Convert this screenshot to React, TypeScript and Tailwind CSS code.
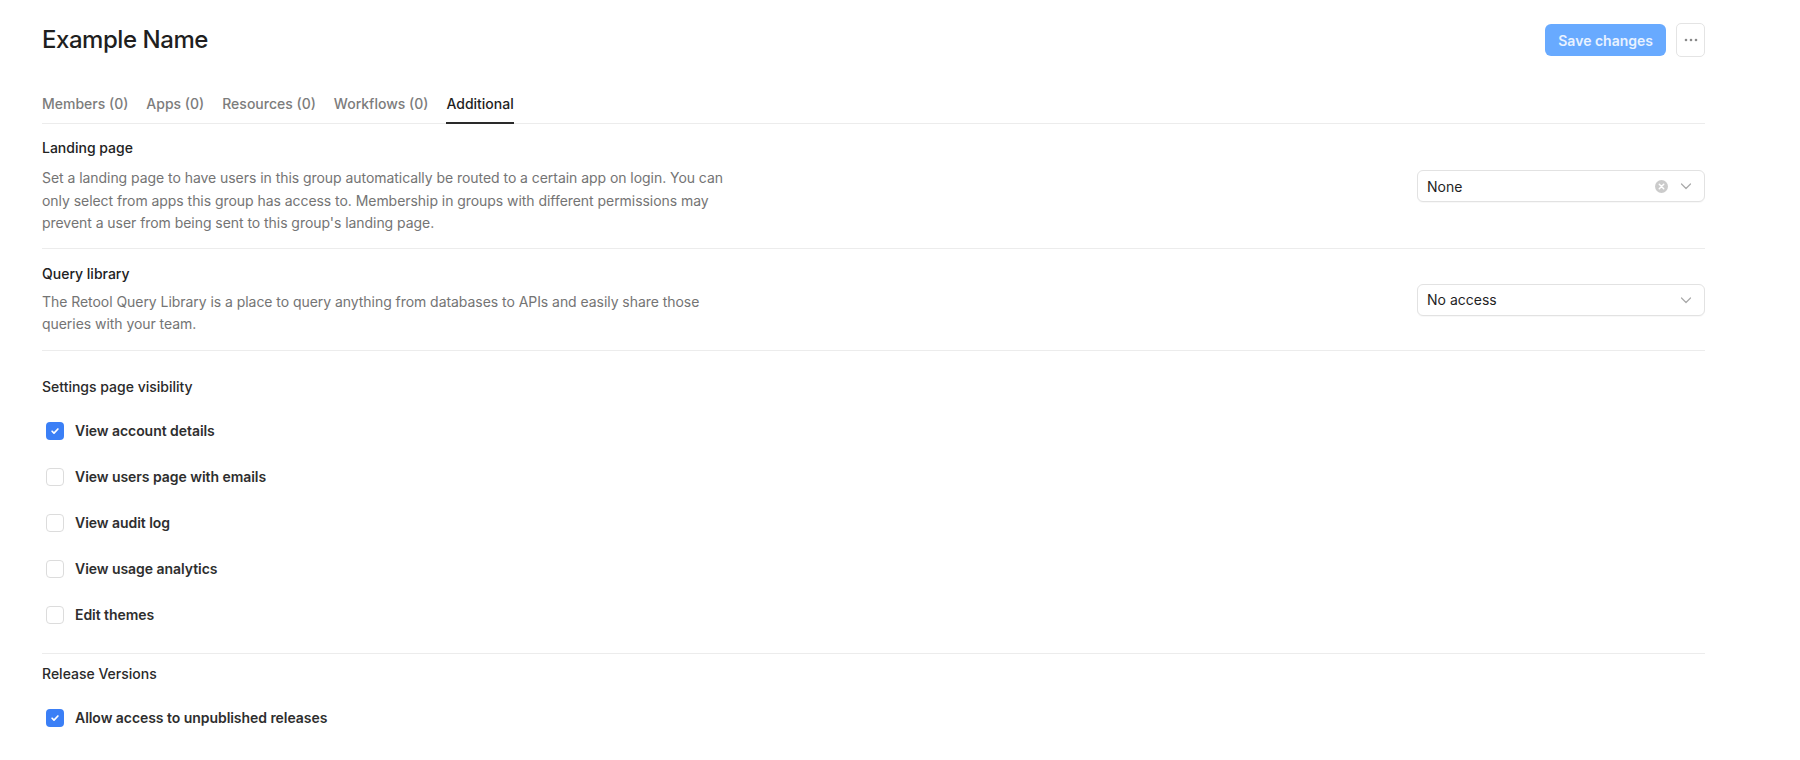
import { useState } from 'react';

const tabs = [
  { label: 'Members (0)', active: false },
  { label: 'Apps (0)', active: false },
  { label: 'Resources (0)', active: false },
  { label: 'Workflows (0)', active: false },
  { label: 'Additional', active: true },
];

const visibilityOptions = [
  { id: 'account', label: 'View account details', checked: true },
  { id: 'users', label: 'View users page with emails', checked: false },
  { id: 'audit', label: 'View audit log', checked: false },
  { id: 'usage', label: 'View usage analytics', checked: false },
  { id: 'themes', label: 'Edit themes', checked: false },
];

function Checkbox({ label, checked, onToggle }: { label: string; checked: boolean; onToggle: () => void }) {
  return (
    <label onClick={onToggle} className="flex items-center h-[46px] cursor-pointer select-none">
      <span
        className={`ml-[4px] w-[18px] h-[18px] rounded-[4px] flex items-center justify-center ${
          checked ? 'bg-[#3b7ff6]' : 'bg-white border border-[#dcdcdc]'
        }`}
      >
        {checked && (
          <svg className="w-[10px] h-[10px]" viewBox="0 0 12 12" fill="none" stroke="white" strokeWidth={2} strokeLinecap="round" strokeLinejoin="round">
            <path d="M2.5 6.3l2.3 2.3 4.7-5" />
          </svg>
        )}
      </span>
      <span className="ml-[11px] text-[14px] font-semibold text-[#2e2e2e] tracking-[-0.05px]">{label}</span>
    </label>
  );
}

function Chevron() {
  return (
    <svg className="w-[12px] h-[12px]" viewBox="0 0 12 12" fill="none" stroke="#a9a9a9" strokeWidth={1.2} strokeLinecap="round" strokeLinejoin="round">
      <path d="M1.5 4l4.5 4.5L10.5 4" />
    </svg>
  );
}

function Select({ value, clearable }: { value: string; clearable?: boolean }) {
  return (
    <div className="w-[288px] h-[32px] shrink-0 rounded-[6px] border border-[#e2e2e2] bg-white shadow-[0_1px_1px_rgba(0,0,0,0.03)] flex items-center pl-[9px] pr-[12px]">
      <span className="flex-1 text-[14px] text-[#1f1f1f]">{value}</span>
      {clearable && (
        <svg className="w-[13px] h-[13px] mr-[12px]" viewBox="0 0 14 14">
          <circle cx="7" cy="7" r="7" fill="#cbcbcb" />
          <path d="M4.6 4.6l4.8 4.8M9.4 4.6l-4.8 4.8" stroke="white" strokeWidth={1.6} strokeLinecap="round" />
        </svg>
      )}
      <Chevron />
    </div>
  );
}

export default function App() {
  const [options, setOptions] = useState(visibilityOptions);
  const [allowUnpublished, setAllowUnpublished] = useState(true);

  const toggle = (id: string) => {
    setOptions(prev => prev.map(o => (o.id === id ? { ...o, checked: !o.checked } : o)));
  };

  return (
    <div className="min-h-[760px] bg-white pl-[42px] pr-[95px] font-['Inter','Noto_Sans',sans-serif] antialiased">
      {/* Header */}
      <div className="flex items-center justify-between pt-[22px]">
        <h1 className="text-[24px] leading-[36px] font-medium text-[#1f1f1f] tracking-[-0.45px]">Example Name</h1>
        <div className="flex items-center gap-[10px]">
          <button className="h-[32px] px-[13px] rounded-[6px] bg-[#68aaff] text-[14px] font-semibold text-[#e9f2ff]">
            Save changes
          </button>
          <button className="w-[29px] h-[34px] rounded-[5px] border border-[#e4e4e4] bg-white flex items-center justify-center">
            <svg className="w-[14px] h-[4px]" viewBox="0 0 14 4" fill="#8a8a8a">
              <circle cx="2" cy="2" r="1.3" />
              <circle cx="7" cy="2" r="1.3" />
              <circle cx="12" cy="2" r="1.3" />
            </svg>
          </button>
        </div>
      </div>

      {/* Tabs */}
      <div className="mt-[36px] flex gap-[18px] border-b border-[#ececec]">
        {tabs.map(tab => (
          <button
            key={tab.label}
            className={`pb-[8px] -mb-px border-b-2 text-[14px] leading-[20px] font-medium ${
              tab.active ? 'border-[#2a2a2a] text-[#1f1f1f]' : 'border-transparent text-[#7c7c7c]'
            }`}
          >
            {tab.label}
          </button>
        ))}
      </div>

      {/* Landing page */}
      <div className="flex items-center justify-between pt-[14px] pb-[13px] border-b border-[#ececec]">
        <div>
          <h3 className="text-[14px] leading-[20px] font-medium text-[#222]">Landing page</h3>
          <p className="mt-[9px] max-w-[700px] text-[14px] leading-[22.5px] text-[#747474] tracking-[-0.05px]">
            Set a landing page to have users in this group automatically be routed to a certain app on login. You can
            only select from apps this group has access to. Membership in groups with different permissions may
            prevent a user from being sent to this group's landing page.
          </p>
        </div>
        <Select value="None" clearable />
      </div>

      {/* Query library */}
      <div className="flex items-center justify-between pt-[15px] pb-[14px] border-b border-[#ececec]">
        <div>
          <h3 className="text-[14px] leading-[20px] font-medium text-[#222]">Query library</h3>
          <p className="mt-[7px] max-w-[690px] text-[14px] leading-[22.5px] text-[#747474] tracking-[-0.05px]">
            The Retool Query Library is a place to query anything from databases to APIs and easily share those
            queries with your team.
          </p>
        </div>
        <Select value="No access" />
      </div>

      {/* Settings page visibility */}
      <div className="pt-[26px] pb-[15px] border-b border-[#ececec]">
        <h3 className="text-[14px] leading-[20px] font-medium text-[#2a2a2a] mb-[11px]">Settings page visibility</h3>
        {options.map(o => (
          <Checkbox key={o.id} label={o.label} checked={o.checked} onToggle={() => toggle(o.id)} />
        ))}
      </div>

      {/* Release versions */}
      <div className="pt-[10px]">
        <h3 className="text-[14px] leading-[20px] font-medium text-[#2a2a2a] mb-[11px]">Release Versions</h3>
        <Checkbox
          label="Allow access to unpublished releases"
          checked={allowUnpublished}
          onToggle={() => setAllowUnpublished(v => !v)}
        />
      </div>
    </div>
  );
}
